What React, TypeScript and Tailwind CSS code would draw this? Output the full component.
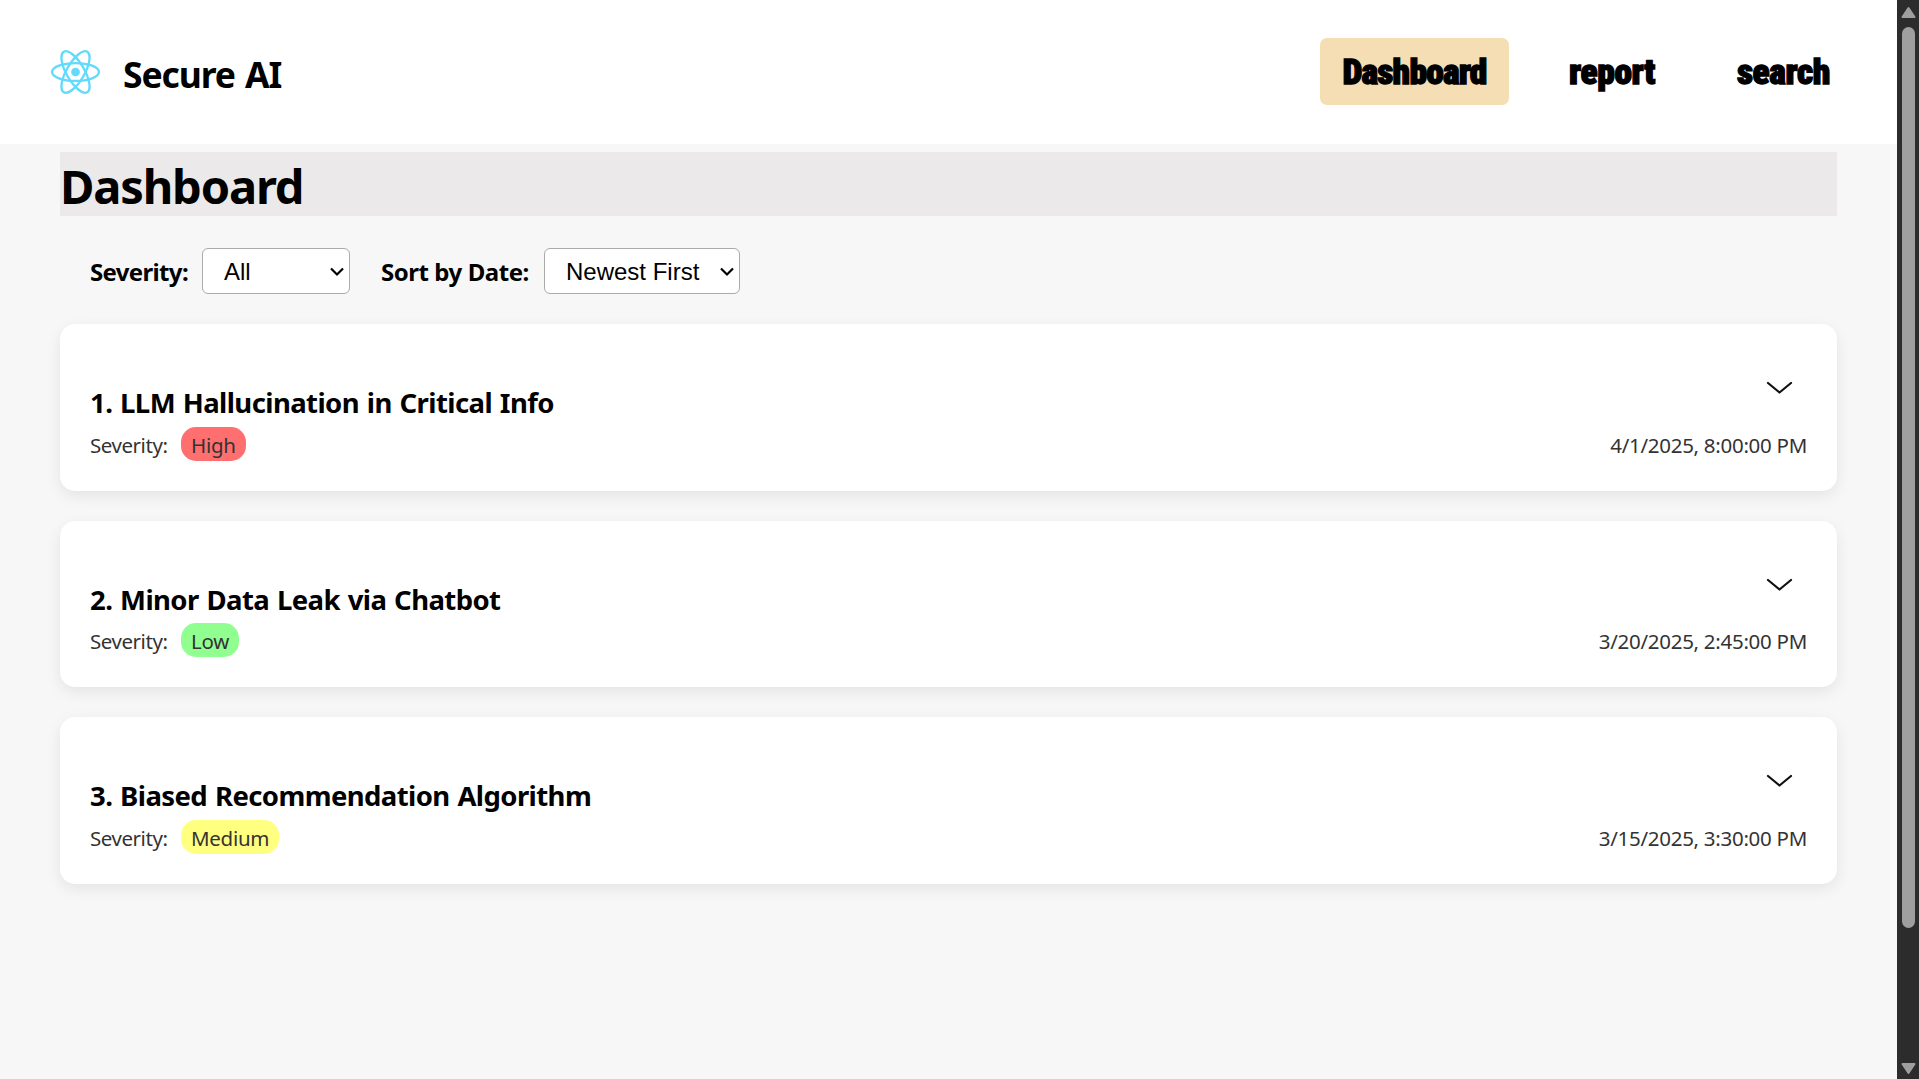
type Incident = { title: string; severity: string; badge: string; date: string };

const incidents: Incident[] = [
  { title: "1. LLM Hallucination in Critical Info", severity: "High", badge: "bg-[#ff6f6f]", date: "4/1/2025, 8:00:00 PM" },
  { title: "2. Minor Data Leak via Chatbot", severity: "Low", badge: "bg-[#90ff90]", date: "3/20/2025, 2:45:00 PM" },
  { title: "3. Biased Recommendation Algorithm", severity: "Medium", badge: "bg-[#ffff80]", date: "3/15/2025, 3:30:00 PM" },
];

function ReactLogo() {
  return (
    <svg className="h-[44px] w-[49px] shrink-0" viewBox="-11.5 -10.3 23 20.6" fill="none" stroke="#61dafb" strokeWidth="1.1">
      <circle r="2.05" fill="#61dafb" stroke="none" />
      <ellipse rx="11" ry="4.2" />
      <ellipse rx="11" ry="4.2" transform="rotate(60)" />
      <ellipse rx="11" ry="4.2" transform="rotate(120)" />
    </svg>
  );
}

function NavItem({ label, width, active = false }: { label: string; width: string; active?: boolean }) {
  return (
    <a
      className={`${width} ${active ? "bg-[#f5deb3] tracking-[-0.8px]" : "tracking-[-0.4px]"} flex h-[67px] items-center justify-center rounded-[7px] pt-[3px] font-['Roboto',sans-serif] text-[35.5px] leading-none font-black [-webkit-text-stroke:1.3px_black] [font-stretch:75%]`}
    >
      {label}
    </a>
  );
}

function Select({ options, width }: { options: string[]; width: string }) {
  return (
    <div className={`relative h-[46px] ${width}`}>
      <select className="h-full w-full appearance-none rounded-[6px] border border-[#aaa] bg-white pl-[21px] pt-px font-['Liberation_Sans',Arial,sans-serif] text-[24px] leading-none font-normal text-black">
        {options.map((o) => (
          <option key={o}>{o}</option>
        ))}
      </select>
      <svg className="pointer-events-none absolute top-[19px] right-[6px] h-[10px] w-[14px]" viewBox="0 0 14 10" fill="none" stroke="black" strokeWidth="2.2">
        <path d="M1 1.5 7 7.5 13 1.5" />
      </svg>
    </div>
  );
}

function IncidentCard({ title, severity, badge, date }: Incident) {
  return (
    <article className="flex h-[166.6px] flex-col justify-end rounded-[15px] bg-white px-[30px] pb-[29.5px] shadow-[0_5px_15px_rgba(0,0,0,0.08)]">
      <div className="flex items-start justify-between">
        <h2 className="mt-[3px] text-[27.5px] leading-[37px] font-bold tracking-[-0.58px] [word-spacing:1.2px]">{title}</h2>
        <svg className="mr-[14px] h-[14px] w-[27px]" viewBox="0 0 27 14" fill="none" stroke="#111" strokeWidth="2.2" strokeLinecap="round" strokeLinejoin="round">
          <path d="M2 2 13.5 11.5 25 2" />
        </svg>
      </div>
      <div className="mt-[6px] flex h-[34px] items-center justify-between text-[20.5px] leading-[34px] tracking-[-0.28px] text-[#333]">
        <p className="flex">
          <span className="w-[91px] pt-px tracking-[-0.45px]">Severity:</span>
          <span className={`h-[34px] rounded-[15px] px-[10px] pt-px ${badge}`}>{severity}</span>
        </p>
        <time className="pt-px">{date}</time>
      </div>
    </article>
  );
}

function Scrollbar() {
  return (
    <div className="flex h-full w-[22px] shrink-0 flex-col items-center bg-[#2c2c2c] pt-[6px] pb-[4px] pl-px">
      <svg className="h-[12px] w-[15px]" viewBox="0 0 15 12" fill="#9f9f9f" stroke="#9f9f9f" strokeWidth="2" strokeLinejoin="round">
        <path d="M7.5 2 13.5 11H1.5z" />
      </svg>
      <div className="mt-[9px] h-[901px] w-[13px] rounded-full bg-[#9f9f9f]" />
      <svg className="mt-auto h-[12px] w-[15px]" viewBox="0 0 15 12" fill="#9f9f9f" stroke="#9f9f9f" strokeWidth="2" strokeLinejoin="round">
        <path d="M7.5 10 13.5 1H1.5z" />
      </svg>
    </div>
  );
}

export default function App() {
  return (
    <div className="flex h-[1079px] w-[1919px] overflow-hidden bg-[#f7f7f7] font-['Noto_Sans',sans-serif] text-black">
      <div className="flex-1">
        <header className="flex h-[144px] items-center justify-between bg-white pr-[45px] pl-[51px]">
          <div className="flex items-center gap-[23px]">
            <ReactLogo />
            <span className="mt-[3px] text-[35.5px] leading-[48px] font-bold tracking-[-1.1px] [word-spacing:2px]">Secure AI</span>
          </div>
          <nav className="mt-[-1px] flex gap-[37px]">
            <NavItem label="Dashboard" width="w-[189px]" active />
            <NavItem label="report" width="w-[132px]" />
            <NavItem label="search" width="w-[137px]" />
          </nav>
        </header>
        <main className="px-[60px] pt-[8px]">
          <h1 className="h-[64px] bg-[#ebe9ea] pt-[3px] text-[47px] leading-[62px] font-bold tracking-[-1.15px]">Dashboard</h1>
          <div className="mt-[32px] flex items-center pl-[30px] text-[24px] font-bold">
            <label className="w-[112px] pt-[2px] tracking-[-0.65px]">Severity:</label>
            <Select options={["All", "High", "Medium", "Low"]} width="w-[148px]" />
            <label className="ml-[31px] w-[163px] pt-[2px] tracking-[-0.45px]">Sort by Date:</label>
            <Select options={["Newest First", "Oldest First"]} width="w-[196px]" />
          </div>
          <div className="mt-[30px] flex flex-col gap-[30px]">
            {incidents.map((i) => (
              <IncidentCard key={i.title} {...i} />
            ))}
          </div>
        </main>
      </div>
      <Scrollbar />
    </div>
  );
}
